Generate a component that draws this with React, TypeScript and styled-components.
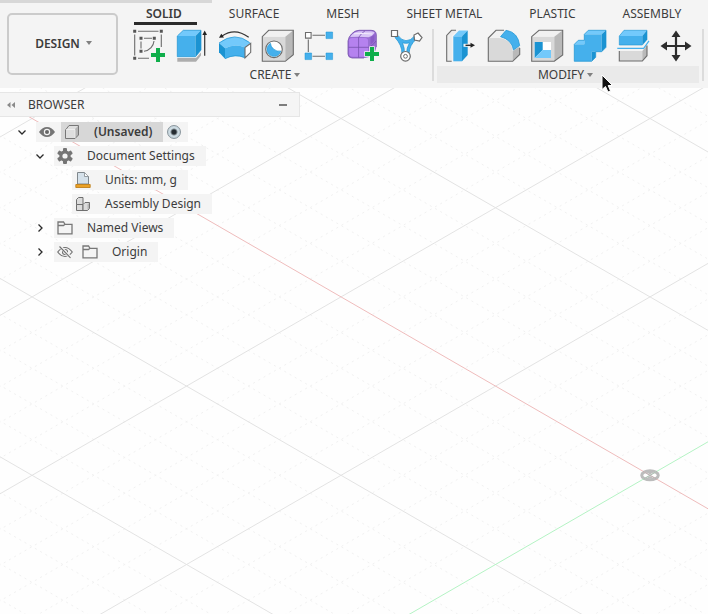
import React, { useState } from "react";
import styled, { createGlobalStyle } from "styled-components";

const GlobalStyle = createGlobalStyle`
  *, *::before, *::after { box-sizing: border-box; }
  body {
    margin: 0;
    background: #fefefe;
    color: #3c3c3c;
    font-family: "Noto Sans", "Open Sans", sans-serif;
    font-size: 12px;
  }
  button { font: inherit; color: inherit; background: none; border: 0; padding: 0; margin: 0; }
`;

const BLUE = "#45b0ec";
const BLUE_LIGHT = "#73c9fb";
const BLUE_DARK = "#1b93d2";
const LINE = "#6c6c6c";
const FACE = "#d9d9d9";
const FACE_DARK = "#b9b9b9";

const Page = styled.div`
  position: relative;
  min-height: 100vh;
  overflow: hidden;
`;

const Viewport = styled.svg`
  position: absolute;
  inset: 0;
  width: 100%;
  height: 100%;
`;

const Ribbon = styled.header`
  position: relative;
  background: #f4f4f4;
`;

const LoadStrip = styled.div`
  width: 212px;
  height: 3px;
  background: #d7d7d7;
`;

const RibbonBody = styled.div`
  display: flex;
`;

const WorkspaceButton = styled.button`
  display: flex;
  align-items: center;
  justify-content: center;
  gap: 6px;
  flex: none;
  width: 111px;
  height: 62px;
  margin: 10px 9px 0 7px;
  padding: 0 0 2px 2px;
  border: 2px solid #cbcbcb;
  border-radius: 5px;
  font-weight: 600;
`;

const Caret = styled.span`
  border: 3px solid transparent;
  border-top: 4px solid #808080;
  border-bottom: 0;
`;

const RibbonMain = styled.div`
  flex: 1;
  min-width: 0;
`;

const Tabs = styled.nav`
  display: flex;
  gap: 20px;
  padding-left: 7px;
`;

const Tab = styled.button<{ $active: boolean }>`
  flex: none;
  height: 22px;
  padding: 0 15px 0 12px;
  line-height: 21px;
  white-space: nowrap;
  font-weight: ${(p) => (p.$active ? 600 : 400)};
  border-bottom: 3px solid ${(p) => (p.$active ? "#2b2b2b" : "transparent")};
`;

const Groups = styled.div`
  display: flex;
  gap: 3px;
  padding: 3px 0 5px;
`;

const Group = styled.section`
  position: relative;
  flex: none;
  display: flex;
  flex-direction: column;
  gap: 2px;
  &:first-child { padding-right: 1px; }
`;

const Tools = styled.div<{ $pad: number }>`
  display: flex;
  padding: 0 ${(p) => p.$pad}px;
`;

const Tool = styled.button`
  width: 43px;
  height: 36px;
  svg { display: block; }
`;

const GroupLabel = styled.button<{ $hover: boolean }>`
  display: flex;
  align-items: center;
  justify-content: center;
  gap: 3px;
  height: 17px;
  padding-right: 5px;
  line-height: 16px;
  background: ${(p) => (p.$hover ? "#eaeaea" : "transparent")};
`;

const Divider = styled.div`
  flex: none;
  width: 2px;
  margin-top: 1px;
  margin-bottom: 2px;
  background: #dcdcdc;
`;

const Pointer = styled.svg`
  position: absolute;
  left: 164px;
  top: 46px;
  pointer-events: none;
`;

const Browser = styled.aside`
  position: relative;
  width: 300px;
  margin-top: 4px;
`;

const BrowserHeader = styled.div`
  display: flex;
  align-items: center;
  height: 25px;
  padding: 0 12px 0 6px;
  background: #f5f5f5;
  border: 1px solid #e6e6e6;
  border-left: 0;
`;

const BrowserTitle = styled.h2`
  flex: 1;
  margin: 0 0 0 12px;
  font-size: 12px;
  line-height: 16px;
  font-weight: 400;
`;

const IconButton = styled.button`
  display: flex;
  align-items: center;
  justify-content: center;
  flex: none;
  svg { display: block; }
`;

const Tree = styled.ul`
  list-style: none;
  margin: 0;
  padding: 5px 0 0;
  display: flex;
  flex-direction: column;
  gap: 4px;
`;

const Row = styled.li<{ $level: number }>`
  display: flex;
  height: 20px;
  padding-left: ${(p) => 14 + p.$level * 18}px;
`;

const Expander = styled.div`
  display: flex;
  align-items: center;
  justify-content: center;
  width: 16px;
  margin-right: 6px;
`;

const Chip = styled.div`
  display: flex;
  align-items: center;
  background: #f4f4f4;
`;

const Slot = styled.span`
  display: flex;
  align-items: center;
  justify-content: center;
  width: 22px;
  svg { display: block; }
`;

const SlotGap = styled.span`
  width: 3px;
`;

const NodeName = styled.span<{ $bold?: boolean }>`
  padding: 0 11px;
  line-height: 20px;
  white-space: nowrap;
  font-weight: ${(p) => (p.$bold ? 600 : 400)};
`;

const Selected = styled.div`
  display: flex;
  align-items: center;
  margin-left: 3px;
  background: #d7d7d7;
`;

const ActiveRadio = styled.input`
  appearance: none;
  width: 14px;
  height: 14px;
  margin: 0 7px 0 4px;
  border: 1px solid #8a969d;
  border-radius: 50%;
  background: radial-gradient(circle, #252c31 0 2px, #d3e1e8 4px, #bccbd3 7px);
`;

/* ---------- construction plane ---------- */

const ORIGIN = { x: 650, y: 475.3 };
const SLOPE = 0.5774;
const MINOR = 35.68;
const EXTENT = 3000;

function Grid() {
  const line = (k: number, dir: 1 | -1) => {
    const c = ORIGIN.y + k * MINOR;
    return {
      x1: ORIGIN.x - EXTENT,
      y1: c - dir * SLOPE * EXTENT,
      x2: ORIGIN.x + EXTENT,
      y2: c + dir * SLOPE * EXTENT,
    };
  };
  const steps = Array.from({ length: 121 }, (_, i) => i - 60).filter((k) => k !== 0);
  const minor = steps.filter((k) => k % 5 !== 0);
  const major = steps.filter((k) => k % 5 === 0);
  return (
    <Viewport aria-hidden="true">
      <g stroke="#f1f1f1" strokeDasharray="2 4">
        {minor.map((k) => <line key={`a${k}`} {...line(k, 1)} />)}
        {minor.map((k) => <line key={`b${k}`} {...line(k, -1)} />)}
      </g>
      <g stroke="#e3e3e3">
        {major.map((k) => <line key={`a${k}`} {...line(k, 1)} />)}
        {major.map((k) => <line key={`b${k}`} {...line(k, -1)} />)}
      </g>
      <ellipse cx="650" cy="475.3" rx="8.3" ry="4.5" fill="#fff" stroke="#bcbcbc" strokeWidth="3" />
      <path d="M646 472L650 474.5L654 472ZM646 478.6L650 476L654 478.6Z" fill="#bcbcbc" />
      <line {...line(0, 1)} stroke="#efbcbc" />
      <line {...line(0, -1)} stroke="#b4f3c4" />
      <path d="M643 471.300L657 479.300M643 479.300L657 471.300" stroke="#b5b5b5" />
    </Viewport>
  );
}

/* ---------- tool icons ---------- */

function ToolIcon({ children }: { children: React.ReactNode }) {
  return (
    <svg width="43" height="36" viewBox="0 0 43 36" fill="none" aria-hidden="true">
      {children}
    </svg>
  );
}

const Plus = ({ x, y }: { x: number; y: number }) => (
  <path
    d={`M${x - 2} ${y - 7}h4v5h5v4h-5v5h-4v-5h-5v-4h5z`}
    fill="#0fae4b"
    stroke="#f4f4f4"
    strokeWidth="1.5"
    paintOrder="stroke"
  />
);

const SketchIcon = () => (
  <ToolIcon>
    <g stroke={LINE} strokeWidth="1.1">
      <path d="M11 3.3H31.5M7.7 6.5V27.5M34.3 6.5V19M11 30.3H22" />
      <path d="M17 10.3H25M14 13.5V20.5M27 13C26.500 18 23 22.500 17 23.300" />
    </g>
    <g fill="#555">
      <path d="M6.200 1.800h3v3h-3zM32.800 1.800h3v3h-3zM6.200 28.800h3v3h-3z" />
      <path d="M12.500 8.800h3v3h-3zM25.800 8.800h3v3h-3zM12.500 21.800h3v3h-3z" />
    </g>
    <Plus x={31} y={27} />
  </ToolIcon>
);

const ExtrudeIcon = () => (
  <ToolIcon>
    <path d="M7.3 30H26L31 24.500V27.500L26 33.700H7.300Z" fill="#adadad" />
    <path d="M7.300 8H25.500V28.700H7.300Z" fill={BLUE} />
    <path d="M7.300 8L13.300 2.300H31L25.500 8Z" fill={BLUE_LIGHT} />
    <path d="M25.500 8L31 2.300V22L25.500 28.700Z" fill={BLUE_DARK} />
    <path d="M7.300 28.700V8L13.300 2.300H31V22L25.500 28.700Z" stroke={BLUE_DARK} strokeWidth=".7" />
    <path d="M34.700 27.700V6" stroke="#333" strokeWidth="1.2" />
    <path d="M34.700 2.500L37 7H32.400Z" fill="#222" />
  </ToolIcon>
);

const RevolveIcon = () => (
  <ToolIcon>
    <path d="M6 15Q22 3 38 15.300L32 19.500Q22 15 12 20.300Z" fill={BLUE_LIGHT} />
    <path d="M12 20.300Q22 15 32 19.500V30Q22 25.500 12 30.700Z" fill={BLUE} />
    <path d="M6 15L12 20.300V30.700L6 24.300Z" fill={BLUE_DARK} />
    <path d="M6 15Q22 3 36.500 14.500M12 30.700Q22 25.500 31.500 29.500" stroke={BLUE_DARK} strokeWidth=".7" />
    <path d="M32 19.500L37.700 15.300V24.300L32 30Z" fill="#fff" stroke={LINE} strokeWidth="1.1" />
    <path d="M35.700 9.300Q22 -1 9 8" stroke="#333" strokeWidth="1.2" />
    <path d="M6 9.800L8.300 5.800L11 9.600Z" fill="#222" />
  </ToolIcon>
);

const HoleIcon = () => (
  <ToolIcon>
    <path d="M6.300 8.700H29.300V33.300H6.300Z" fill={FACE} />
    <path d="M6.300 8.700L12.700 2.300H37.300L29.300 8.700Z" fill="#f1f1f1" />
    <path d="M29.300 8.700L37.300 2.300V26.700L29.300 33.300Z" fill={FACE_DARK} />
    <path d="M6.300 8.700L12.700 2.300H37.300V26.700L29.300 33.300H6.300Z" stroke={LINE} strokeWidth="1.1" />
    <circle cx="18" cy="21.300" r="8.300" fill="#fff" stroke={LINE} strokeWidth="1.1" />
    <path d="M14.500 15.300A7 7 0 1 0 24.800 23Q21 24 17.500 21Q14.500 18.500 14.500 15.300Z" fill={BLUE} stroke={BLUE_DARK} strokeWidth=".6" />
  </ToolIcon>
);

const PatternIcon = () => (
  <ToolIcon>
    <path d="M13.500 7.300H26M9.300 11.500V24M13.500 28.300H26" stroke={LINE} strokeWidth="1.1" />
    <path d="M6.500 4.500h5.600v5.600h-5.600z" fill="#fff" stroke={LINE} strokeWidth="1.1" />
    <path d="M27 4h6.600v6.600h-6.600zM6 25h6.600v6.600H6zM27 25h6.600v6.600h-6.600z" fill={BLUE} stroke={BLUE_DARK} strokeWidth=".5" />
  </ToolIcon>
);

const FormIcon = () => (
  <ToolIcon>
    <path d="M6 13Q6.500 9 9.500 6Q12.500 2.500 17 2.300H29Q34.300 2.300 34.300 7V19Q34 24 30 27Q27 30 23 30H10Q6 29.500 6 26Z" fill="#9a6fd4" />
    <path d="M8 9Q12 3.400 17 3.200H29Q32.500 3.200 32.500 5Q30 8.500 26.500 9.200Q17 8.200 8 9Z" fill="#d9c6f6" />
    <path d="M7.200 12.500Q7.200 10 10 10H23Q26 10 26 12.500V25.500Q26 28.700 22.500 28.700H10.700Q7.200 28.700 7.200 25.500Z" fill="#b582ef" />
    <path d="M16.600 9.500V29.500M6.500 19.300H26.500Q31 17.500 34 13M16.600 9.500Q19 5.500 23 2.800" stroke="#7650ad" strokeWidth=".8" />
    <path d="M28.500 9Q31 8 32.500 6.500V12.500Q31 15 28.500 16.500Z" fill="#8a5cc6" />
    <path d="M12 5.800Q22 5 30.300 6" stroke="#f2eafc" strokeWidth="1" />
    <path d="M6 13Q6.500 9 9.500 6Q12.500 2.500 17 2.300H29Q34.300 2.300 34.300 7V19M6 13V26Q6 29.500 10 30H22" stroke="#7650ad" strokeWidth=".8" />
    <Plus x={30} y={26} />
  </ToolIcon>
);

const DeriveIcon = () => (
  <ToolIcon>
    <path
      d="M10 9.500L13 7.500Q16.500 12.500 21 12.700Q26 12.500 29 8.500L31 11.500Q24.500 17 24 25.500H17Q17 17 10 9.500ZM17.500 14.800Q19.700 20 19.500 25.500H21.500Q21.500 20 24.500 14.800Q21 15.800 17.500 14.800Z"
      fill={BLUE}
      fillRule="evenodd"
      stroke={BLUE_DARK}
      strokeWidth=".7"
    />
    <path d="M6.500 2.500h6v6h-6z" fill="#fff" stroke={LINE} strokeWidth="1.200" />
    <path d="M33 5L37 9.500L34.500 13L29.500 12L29 7Z" fill="#fff" stroke={LINE} strokeWidth="1.200" />
    <circle cx="20.500" cy="28.300" r="4.800" fill="#fff" stroke={LINE} strokeWidth="1.200" />
    <circle cx="20.500" cy="28.300" r="1.900" stroke={LINE} />
  </ToolIcon>
);

const PressPullIcon = () => (
  <ToolIcon>
    <path d="M12.700 33.300H7.700V7.500L12.500 2.300H18L12.700 8Z" fill="#ececec" />
    <path d="M12.700 33.300H7.700V7.500L12.500 2.300H17" stroke={LINE} strokeWidth="1.100" />
    <path d="M14.300 8.300H23V33.300H14.300Z" fill={BLUE} />
    <path d="M14.300 8.300L20 2.500H28.700L23 8.300Z" fill={BLUE_LIGHT} />
    <path d="M23 8.300L28.700 2.500V27L23 33.300Z" fill={BLUE_DARK} />
    <path d="M24.500 17.300H33" stroke="#f4f4f4" strokeWidth="3" />
    <path d="M26.500 17.300H33" stroke="#222" strokeWidth="1.300" />
    <path d="M36 17.300L31.500 14.800V19.800Z" fill="#222" />
  </ToolIcon>
);

const FilletIcon = () => (
  <ToolIcon>
    <path d="M6.300 10L14 2.300H23L17 10Z" fill="#f1f1f1" />
    <path d="M6.300 33.300V10H17Q29 11 30.700 23V33.300Z" fill={FACE} />
    <path d="M30.700 23L37.700 18.500V26.500L30.700 33.300Z" fill={FACE_DARK} />
    <path d="M22 2.300H14L6.300 10V33.300H30.700L37.700 26.500V20" stroke={LINE} strokeWidth="1.100" />
    <path d="M24 2.300Q36 4 37.700 17.500L31.500 22Q29.500 11.500 18.500 8.700Z" fill={BLUE} stroke={BLUE_DARK} strokeWidth=".7" />
  </ToolIcon>
);

const ShellIcon = () => (
  <ToolIcon>
    <path d="M6.700 8.700H29.300V33.300H6.700Z" fill={FACE} />
    <path d="M6.700 8.700L14 2.300H37.700L29.300 8.700Z" fill="#f1f1f1" />
    <path d="M29.300 8.700L37.700 2.300V27L29.300 33.300Z" fill={FACE_DARK} />
    <path d="M6.700 8.700L14 2.300H37.700V27L29.300 33.300H6.700Z" stroke={LINE} strokeWidth="1.100" />
    <path d="M9.700 14H26V30H9.700Z" fill="#fff" />
    <path d="M9.700 14H17.700V22L9.700 30Z" fill={BLUE_DARK} />
    <path d="M9.700 30L17.700 22H26V30Z" fill={BLUE_LIGHT} />
  </ToolIcon>
);

const CombineIcon = () => (
  <ToolIcon>
    <path d="M16.300 6.300H33.700V23.700H23.700V33.300H6.300V16.300H16.300Z" fill={BLUE} />
    <path d="M16.300 6.300L20.300 2.300H38L33.700 6.300ZM6.300 16.300L10.300 12.300H16.300V16.300Z" fill={BLUE_LIGHT} />
    <path d="M33.700 6.300L38 2.300V19.300L33.700 23.700ZM23.700 23.700H27.700V29.300L23.700 33.300Z" fill={BLUE_DARK} />
    <path d="M6.300 33.300V16.300L10.300 12.300H16.300V6.300L20.300 2.300H38V19.300L33.700 23.700H27.700V29.300L23.700 33.300Z" stroke={BLUE_DARK} strokeWidth=".7" />
  </ToolIcon>
);

const SplitIcon = () => (
  <ToolIcon>
    <path d="M8.300 8H31.300V17H8.300Z" fill={BLUE} />
    <path d="M8.300 8L13 2.300H36L31.300 8Z" fill={BLUE_LIGHT} />
    <path d="M31.300 8L36 2.300V11.500L31.300 17Z" fill={BLUE_DARK} />
    <path d="M8.300 17V8L13 2.300H36V11.500L31.300 17Z" stroke={BLUE_DARK} strokeWidth=".6" />
    <path d="M6.300 20.300H32.700L38 12.800" stroke={BLUE} strokeWidth="1.200" />
    <path d="M8.300 23H31.300V33H8.300Z" fill={FACE} />
    <path d="M31.300 23L36 17.500V27.700L31.300 33Z" fill={FACE_DARK} />
    <path d="M8.300 23V33H31.300L36 27.700V17.500" stroke={LINE} strokeWidth="1.100" />
  </ToolIcon>
);

const MoveIcon = () => (
  <ToolIcon>
    <path d="M22 6V30M10 18H34" stroke="#2d2d2d" strokeWidth="2.200" />
    <path
      d="M22 2.500L26.500 9H17.500ZM22 33.500L26.500 27H17.500ZM6.500 18L13 13.500V22.500ZM37.500 18L31 13.500V22.500Z"
      fill="#2d2d2d"
    />
  </ToolIcon>
);

/* ---------- browser icons ---------- */

const Chevron = ({ open }: { open: boolean }) => (
  <svg width="10" height="10" viewBox="0 0 10 10" fill="none" stroke="#2b2b2b" strokeWidth="1.300">
    <path d={open ? "M1.500 3.500L5 7L8.500 3.500" : "M3.500 1.500L7 5L3.500 8.500"} />
  </svg>
);

const EyeIcon = () => (
  <svg width="16" height="12" viewBox="0 0 16 12">
    <path d="M0 6Q3.500 1 8 1T16 6Q12.500 11 8 11T0 6Z" fill="#757575" />
    <circle cx="8" cy="6" r="3.200" fill="#f4f4f4" />
    <circle cx="8" cy="6" r="2" fill="#666" />
  </svg>
);

const HiddenEyeIcon = () => (
  <svg width="16" height="14" viewBox="0 0 16 14" fill="none" stroke="#6e6e6e" strokeWidth="1.100">
    <path d="M.7 7Q4 2.500 8 2.500T15.300 7Q12 11.500 8 11.500T.7 7Z" />
    <circle cx="8" cy="7" r="2.500" />
    <path d="M3 1.500L13.500 12.500" stroke="#f4f4f4" strokeWidth="3" />
    <path d="M2.500 1.500L13.500 12.800" />
  </svg>
);

const GearIcon = () => (
  <svg width="16" height="16" viewBox="0 0 16 16">
    <g fill="#757575">
      {[0, 60, 120].map((a) => (
        <rect key={a} x="6" y="0" width="4" height="16" rx="1" transform={`rotate(${a} 8 8)`} />
      ))}
      <circle cx="8" cy="8" r="5.700" />
    </g>
    <circle cx="8" cy="8" r="2.600" fill="#f4f4f4" />
  </svg>
);

const FolderIcon = () => (
  <svg width="16" height="14" viewBox="0 0 16 14" fill="none" stroke="#777" strokeWidth="1.300">
    <path d="M1 12.800V1H6.500L8 3.300H15V12.800ZM1 4.500H6.500L8 3.300" />
  </svg>
);

const BodyIcon = () => (
  <svg width="16" height="16" viewBox="0 0 16 16">
    <path d="M1.500 5L5 1.500H14.500V11L11 14.500H1.500Z" fill="#dedede" />
    <path d="M11 5L14.500 1.500V11L11 14.500Z" fill="#b5b5b5" />
    <path d="M1.500 6L5 1.500H14.500V11L11 14.500H1.500Z" fill="none" stroke="#777" strokeLinejoin="round" />
    <path d="M2 5.500H11V14" fill="none" stroke="#f5f5f5" strokeWidth=".7" />
  </svg>
);

const UnitsIcon = () => (
  <svg width="16" height="16" viewBox="0 0 16 16">
    <path d="M2.500 12V.5H9.500L13.500 4.500V12Z" fill="#d5e1ea" stroke="#7f878c" />
    <path d="M9.500 .8V4.500H13.300" fill="#fff" stroke="#7f878c" strokeWidth=".8" />
    <path d="M.8 12.500H15.200V15.500H.8Z" fill="#eba125" stroke="#b9770f" strokeWidth=".8" />
  </svg>
);

const AssemblyIcon = () => (
  <svg width="16" height="16" viewBox="0 0 16 16" fill="#dcdcdc" stroke="#6f6f6f" strokeLinejoin="round">
    <path d="M1.500 3.500L3.500 1.500H8V8.500H1.500Z" />
    <path d="M1.500 8.500H8V14.500H1.500Z" />
    <path d="M8 8.500L10 6.500H14.500V12.500L12.500 14.500H8Z" />
    <path d="M12.500 8.500L14.100 7V12.300L12.500 14Z" fill="#b5b5b5" stroke="none" />
  </svg>
);

/* ---------- page ---------- */

const TABS = ["SOLID", "SURFACE", "MESH", "SHEET METAL", "PLASTIC", "ASSEMBLY"];

const CREATE_TOOLS = [
  { name: "Create Sketch", Icon: SketchIcon },
  { name: "Extrude", Icon: ExtrudeIcon },
  { name: "Revolve", Icon: RevolveIcon },
  { name: "Hole", Icon: HoleIcon },
  { name: "Rectangular Pattern", Icon: PatternIcon },
  { name: "Create Form", Icon: FormIcon },
  { name: "Derive", Icon: DeriveIcon },
];

const MODIFY_TOOLS = [
  { name: "Press Pull", Icon: PressPullIcon },
  { name: "Fillet", Icon: FilletIcon },
  { name: "Shell", Icon: ShellIcon },
  { name: "Combine", Icon: CombineIcon },
  { name: "Split Body", Icon: SplitIcon },
  { name: "Move", Icon: MoveIcon },
];

interface NodeProps {
  level: number;
  open?: boolean;
  icons: React.ReactNode[];
  label: string;
}

function TreeNode({ level, open, icons, label }: NodeProps) {
  return (
    <Row $level={level}>
      <Expander>
        {open !== undefined && (
          <IconButton aria-label={`Toggle ${label}`} aria-expanded={open}>
            <Chevron open={open} />
          </IconButton>
        )}
      </Expander>
      <Chip>
        {icons.map((icon, i) => (
          <React.Fragment key={i}>
            {i > 0 && <SlotGap />}
            <Slot>{icon}</Slot>
          </React.Fragment>
        ))}
        <NodeName>{label}</NodeName>
      </Chip>
    </Row>
  );
}

export default function App() {
  const [tab, setTab] = useState("SOLID");
  return (
    <Page>
      <GlobalStyle />
      <Grid />
      <Ribbon>
        <LoadStrip />
        <RibbonBody>
          <WorkspaceButton>
            DESIGN <Caret />
          </WorkspaceButton>
          <RibbonMain>
            <Tabs>
              {TABS.map((t) => (
                <Tab key={t} $active={t === tab} onClick={() => setTab(t)}>
                  {t}
                </Tab>
              ))}
            </Tabs>
            <Groups>
              <Group>
                <Tools $pad={0}>
                  {CREATE_TOOLS.map(({ name, Icon }) => (
                    <Tool key={name} aria-label={name}><Icon /></Tool>
                  ))}
                </Tools>
                <GroupLabel $hover={false}>CREATE <Caret /></GroupLabel>
              </Group>
              <Divider />
              <Group>
                <Tools $pad={2}>
                  {MODIFY_TOOLS.map(({ name, Icon }) => (
                    <Tool key={name} aria-label={name}><Icon /></Tool>
                  ))}
                </Tools>
                <GroupLabel $hover>MODIFY <Caret /></GroupLabel>
                <Pointer width="14" height="20" viewBox="0 0 14 20" aria-hidden="true">
                  <path d="M1 1V15.500L4.500 12.500L7 18L9.500 17L7.200 11.500H11.500Z" fill="#111" stroke="#fff" />
                </Pointer>
              </Group>
              <Divider />
            </Groups>
          </RibbonMain>
        </RibbonBody>
      </Ribbon>
      <Browser>
        <BrowserHeader>
          <IconButton aria-label="Collapse browser">
            <svg width="10" height="8" viewBox="0 0 10 8" fill="#8a8a8a">
              <path d="M4.500 1V7L1 4ZM9 1V7L5.500 4Z" />
            </svg>
          </IconButton>
          <BrowserTitle>BROWSER</BrowserTitle>
          <IconButton aria-label="Minimize browser">
            <svg width="8" height="8" viewBox="0 0 8 8">
              <path d="M0 4H8" stroke="#7d7d7d" strokeWidth="2" />
            </svg>
          </IconButton>
        </BrowserHeader>
        <Tree>
          <Row $level={0}>
            <Expander>
              <IconButton aria-label="Toggle (Unsaved)" aria-expanded>
                <Chevron open />
              </IconButton>
            </Expander>
            <Chip>
              <Slot><EyeIcon /></Slot>
              <Selected>
                <Slot><BodyIcon /></Slot>
                <NodeName $bold>(Unsaved)</NodeName>
              </Selected>
              <ActiveRadio type="radio" name="active" defaultChecked aria-label="Activate component" />
            </Chip>
          </Row>
          <TreeNode level={1} open icons={[<GearIcon />]} label="Document Settings" />
          <TreeNode level={2} icons={[<UnitsIcon />]} label="Units: mm, g" />
          <TreeNode level={2} icons={[<AssemblyIcon />]} label="Assembly Design" />
          <TreeNode level={1} open={false} icons={[<FolderIcon />]} label="Named Views" />
          <TreeNode level={1} open={false} icons={[<HiddenEyeIcon />, <FolderIcon />]} label="Origin" />
        </Tree>
      </Browser>
    </Page>
  );
}
